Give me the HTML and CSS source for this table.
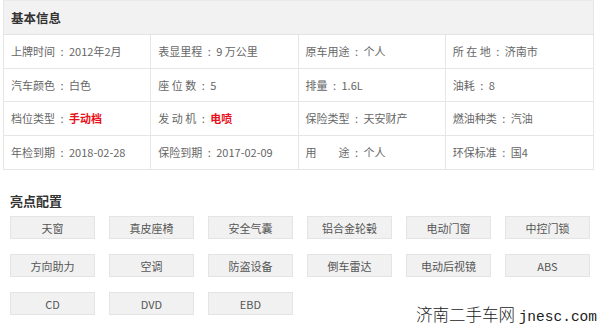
FILE: index.html
```html
<!DOCTYPE html>
<html lang="zh">
<head>
<meta charset="utf-8">
<link rel="stylesheet" href="styles.css">
</head>
<body>
<div class="page">
  <div class="info">
    <div class="info-head">基本信息</div>
    <div class="info-grid">
      <div class="cell">上牌时间<span class="c">:</span>2012年2月</div>
      <div class="cell">表显里程<span class="c">:</span>9 万公里</div>
      <div class="cell">原车用途<span class="c">:</span>个人</div>
      <div class="cell">所 在 地<span class="c">:</span>济南市</div>
      <div class="cell">汽车颜色<span class="c">:</span>白色</div>
      <div class="cell">座 位 数<span class="c">:</span>5</div>
      <div class="cell">排量<span class="c">:</span>1.6L</div>
      <div class="cell">油耗<span class="c">:</span>8</div>
      <div class="cell">档位类型<span class="c">:</span> <span class="hl">手动档</span></div>
      <div class="cell">发 动 机<span class="c">:</span><span class="hl">电喷</span></div>
      <div class="cell">保险类型<span class="c">:</span>天安财产</div>
      <div class="cell">燃油种类<span class="c">:</span>汽油</div>
      <div class="cell">年检到期<span class="c">:</span>2018-02-28</div>
      <div class="cell">保险到期<span class="c">:</span>2017-02-09</div>
      <div class="cell">用　　途<span class="c">:</span>个人</div>
      <div class="cell">环保标准<span class="c">:</span>国4</div>
    </div>
  </div>
  <div class="feat-title">亮点配置</div>
  <div class="feats">
    <div class="tag">天窗</div>
    <div class="tag">真皮座椅</div>
    <div class="tag">安全气囊</div>
    <div class="tag">铝合金轮毂</div>
    <div class="tag">电动门窗</div>
    <div class="tag">中控门锁</div>
    <div class="tag">方向助力</div>
    <div class="tag">空调</div>
    <div class="tag">防盗设备</div>
    <div class="tag">倒车雷达</div>
    <div class="tag">电动后视镜</div>
    <div class="tag">ABS</div>
    <div class="tag">CD</div>
    <div class="tag">DVD</div>
    <div class="tag">EBD</div>
  </div>
  <div class="watermark"><span class="wm-cn">济南二手车网</span> <span class="wm-en">jnesc.com</span></div>
</div>
</body>
</html>
```
FILE: styles.css
```css
html, body {
  margin: 0;
  padding: 0;
  background: #fff;
}
body {
  font-family: "Noto Sans CJK SC", "Noto Sans", sans-serif;
  color: #666;
  font-size: 11px;
}
.page {
  position: relative;
  width: 600px;
  height: 328px;
  overflow: hidden;
}
.info {
  margin: 0 6px 0 3px;
  border: 1px solid #e6e6e6;
  border-top: none;
}
.info-head {
  height: 33px;
  line-height: 33px;
  background: #f2f2f2;
  border-top: 1px solid #eaeaea;
  border-bottom: 1px solid #e3e3e3;
  padding-left: 7px;
  font-size: 12.5px;
  font-weight: bold;
  color: #333;
}
.info-grid {
  display: grid;
  grid-template-columns: repeat(4, 1fr);
  grid-auto-rows: 33.5px;
}
.cell {
  display: flex;
  align-items: center;
  padding-left: 7px;
  border-right: 1px solid #e6e6e6;
  border-bottom: 1px solid #e6e6e6;
  white-space: pre;
}
.c {
  display: inline-block;
  width: 14px;
  text-align: center;
}
.cell:nth-child(4n) {
  border-right: none;
}
.cell:nth-last-child(-n+4) {
  border-bottom: none;
}
.hl {
  color: #e8101a;
  font-weight: bold;
}
.feat-title {
  margin: 22px 0 0 10px;
  font-size: 13px;
  font-weight: bold;
  color: #333;
  line-height: 18px;
}
.feats {
  display: grid;
  grid-template-columns: repeat(6, 85px);
  grid-auto-rows: 23px;
  column-gap: 14px;
  row-gap: 15px;
  margin: 6px 0 0 10px;
}
.tag {
  box-sizing: border-box;
  background: #f1f1f1;
  border: 1px solid #e4e4e4;
  color: #555;
  font-size: 11px;
  display: flex;
  align-items: center;
  justify-content: center;
}
.watermark {
  position: absolute;
  right: 3px;
  bottom: 1px;
  color: #222;
  font-size: 16.5px;
  line-height: 20px;
  white-space: pre;
}
.wm-cn {
  font-family: "Noto Sans CJK SC", sans-serif;
  font-weight: 300;
}
.wm-en {
  font-family: "Liberation Mono", monospace;
  font-size: 14.5px;
}
```
